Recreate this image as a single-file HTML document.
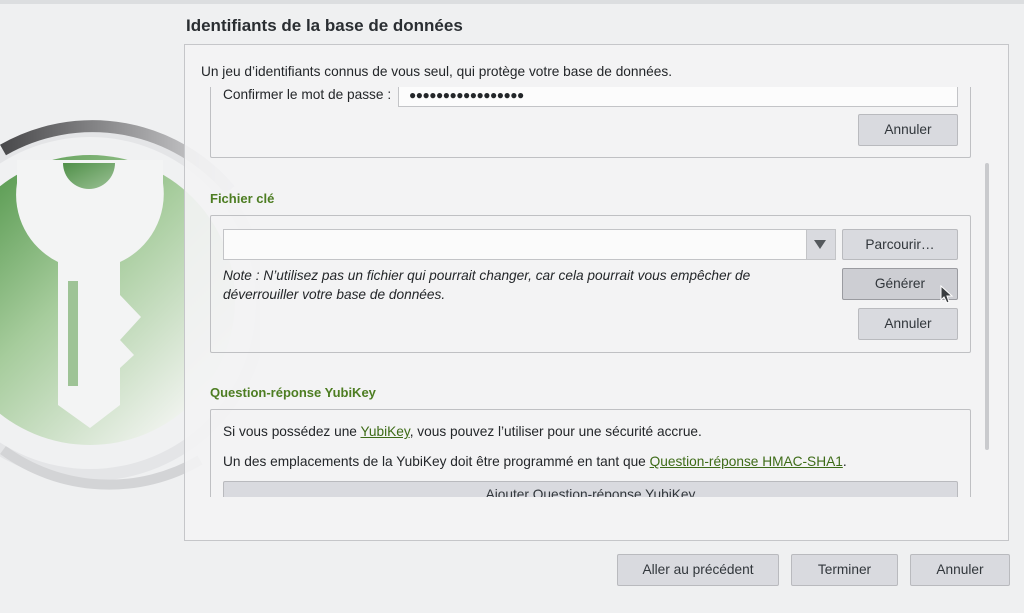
<!DOCTYPE html>
<html><head><meta charset="utf-8"><style>
*{box-sizing:border-box}
body{margin:0;width:1024px;height:613px;background:#eff0f1;font-family:"Liberation Sans","DejaVu Sans",sans-serif;font-size:13.7px;color:#232629;position:relative;overflow:hidden}
.a{position:absolute;white-space:nowrap}
.btn{position:absolute;background:#d9dadf;border:1px solid #b9babe;border-radius:2px;text-align:center;color:#31363b;font-size:13.7px}
.box{position:absolute;border:1px solid #bfc0c3;border-radius:2px}
.lbl{position:absolute;color:#4d7d22;font-weight:bold;font-size:13px}
a{color:#3d6b17;text-decoration:underline}
</style></head><body>
<div class="a" style="left:0;top:0;width:1024px;height:4px;background:#dcdee0"></div>
<svg class="a" style="left:0;top:0" width="260" height="613">
<defs>
<linearGradient id="ring" x1="0" y1="0" x2="1" y2="0"><stop offset="0" stop-color="#4a4a4c"/><stop offset="1" stop-color="#d8d8da"/></linearGradient>
<linearGradient id="g" x1="0" y1="0" x2="1" y2="1"><stop offset="0" stop-color="#3f8a38"/><stop offset="0.45" stop-color="#a6cc9c"/><stop offset="0.85" stop-color="#eef2ec"/></linearGradient>
<linearGradient id="h" x1="0" y1="0" x2="1" y2="1"><stop offset="0" stop-color="#4f8f48"/><stop offset="1" stop-color="#9cc296"/></linearGradient>
</defs>
<circle cx="90" cy="303" r="178" fill="#e4e5e7"/>
<path d="M3 150 A180 180 0 0 1 230 190" stroke="url(#ring)" stroke-width="12" fill="none"/>
<path d="M3 450 A180 180 0 0 0 200 460" stroke="#d3d4d6" stroke-width="10" fill="none"/>
<circle cx="90" cy="303" r="166" fill="#f0f1f2"/>
<circle cx="90" cy="300" r="145" fill="url(#g)"/>
<path d="M17 183 A75 75 0 0 0 58 262 L58 405 L90 428 L120 405 L120 368 L134 355 L120 340 L141 317 L120 295 L120 262 A75 75 0 0 0 163 183 L163 160 L17 160 Z" fill="#f3f4f4"/>
<path d="M63 163 L115 163 A26 26 0 0 1 63 163 Z" fill="url(#h)"/>
<rect x="68" y="281" width="10" height="105" fill="#9ec396"/>
</svg>
<div class="a" style="left:186px;top:16px;font-size:17px;font-weight:bold;color:#2a2e32">Identifiants de la base de données</div>
<div class="a" style="left:184px;top:44px;width:825px;height:497px;border:1px solid #c5c6c9;background:rgba(243,243,244,0.9)"></div>
<div class="a" style="left:201px;top:64px">Un jeu d’identifiants connus de vous seul, qui protège votre base de données.</div>
<div class="a" style="left:197px;top:87px;width:792px;height:410px;overflow:hidden">
 <div class="box" style="left:13px;top:-20px;width:761px;height:91px"></div>
 <div class="a" style="left:26px;top:0px">Confirmer le mot de passe :</div>
 <div class="a" style="left:201px;top:-10px;width:560px;height:30px;background:#fcfcfc;border:1px solid #c3c4c7;padding:10px 0 0 10px;font-size:12px;letter-spacing:-0.5px">●●●●●●●●●●●●●●●●●</div>
 <div class="btn" style="left:661px;top:27px;width:100px;height:32px;line-height:30px">Annuler</div>
 <div class="lbl" style="left:13px;top:104px">Fichier clé</div>
 <div class="box" style="left:13px;top:128px;width:761px;height:138px"></div>
 <div class="a" style="left:26px;top:142px;width:613px;height:31px;background:#fbfbfb;border:1px solid #c3c4c7"></div>
 <div class="a" style="left:609px;top:142px;width:30px;height:31px;background:#d9dadf;border:1px solid #c3c4c7"></div>
 <div class="a" style="left:617px;top:153px;width:0;height:0;border-left:6px solid transparent;border-right:6px solid transparent;border-top:9px solid #55595d"></div>
 <div class="btn" style="left:645px;top:142px;width:116px;height:31px;line-height:29px">Parcourir…</div>
 <div class="btn" style="left:645px;top:181px;width:116px;height:32px;line-height:30px;background:#cdced3;border-color:#9a9ba0">Générer</div>
 <div class="btn" style="left:661px;top:221px;width:100px;height:32px;line-height:30px">Annuler</div>
 <div class="a" style="left:26px;top:179px;font-style:italic;line-height:19px">Note : N’utilisez pas un fichier qui pourrait changer, car cela pourrait vous empêcher de<br>déverrouiller votre base de données.</div>
 <svg class="a" style="left:743px;top:198px" width="14" height="20"><path d="M1 1 L1 15 L4 12 L7 18 L9 17 L7 11 L12 11 Z" fill="#3a3d40" stroke="#fff" stroke-width="1"/></svg>
 <div class="lbl" style="left:13px;top:298px">Question-réponse YubiKey</div>
 <div class="box" style="left:13px;top:322px;width:761px;height:120px"></div>
 <div class="a" style="left:26px;top:337px">Si vous possédez une <a>YubiKey</a>, vous pouvez l’utiliser pour une sécurité accrue.</div>
 <div class="a" style="left:26px;top:367px">Un des emplacements de la YubiKey doit être programmé en tant que <a>Question-réponse HMAC-SHA1</a>.</div>
 <div class="btn" style="left:26px;top:394px;width:735px;height:32px;line-height:26px">Ajouter Question-réponse YubiKey</div>
</div>
<div class="a" style="left:985px;top:163px;width:4px;height:287px;background:#c9cacd;border-radius:2px"></div>
<div class="btn" style="left:617px;top:554px;width:162px;height:32px;line-height:30px">Aller au précédent</div>
<div class="btn" style="left:791px;top:554px;width:107px;height:32px;line-height:30px">Terminer</div>
<div class="btn" style="left:910px;top:554px;width:100px;height:32px;line-height:30px">Annuler</div>
</body></html>
